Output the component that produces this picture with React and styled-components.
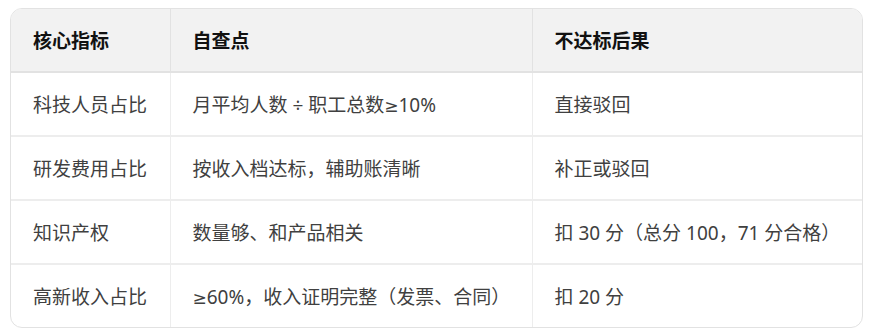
import React from "react";
import styled, { createGlobalStyle } from "styled-components";

const GlobalStyle = createGlobalStyle`
  html, body {
    margin: 0;
    padding: 0;
    background: #ffffff;
  }
  body {
    font-family: "Noto Sans", "Noto Sans CJK SC", sans-serif;
  }
`;

const Ge = () => <Sym>≥</Sym>;

const rows = [
  ["科技人员占比", <>月平均人数 ÷ 职工总数<Ge />10%</>, "直接驳回"],
  ["研发费用占比", "按收入档达标，辅助账清晰", "补正或驳回"],
  ["知识产权", "数量够、和产品相关", "扣 30 分（总分 100，71 分合格）"],
  ["高新收入占比", <><Ge />60%，收入证明完整（发票、合同）</>, "扣 20 分"],
];

const App = () => {
  return (
    <>
      <GlobalStyle />
      <Page>
        <Card>
          <Table>
            <colgroup>
              <col style={{ width: 159 }} />
              <col style={{ width: 362 }} />
              <col />
            </colgroup>
            <thead>
              <tr>
                <Th>核心指标</Th>
                <Th>自查点</Th>
                <Th $last>不达标后果</Th>
              </tr>
            </thead>
            <tbody>
              {rows.map((row, i) => (
                <tr key={i}>
                  {row.map((cell, j) => (
                    <Td key={j} $last={j === row.length - 1} $bottom={i === rows.length - 1}>
                      {cell}
                    </Td>
                  ))}
                </tr>
              ))}
            </tbody>
          </Table>
        </Card>
      </Page>
    </>
  );
};

export default App;

const Page = styled.div`
  padding: 8px 8px 0 10px;
`;

const Card = styled.div`
  width: 851px;
  border: 1px solid #e2e2e2;
  border-radius: 12px;
  overflow: hidden;
`;

const Table = styled.table`
  width: 100%;
  border-collapse: collapse;
  table-layout: fixed;
`;

const Th = styled.th`
  height: 62px;
  padding: 0 22px;
  text-align: left;
  font-size: 19px;
  font-weight: 700;
  color: #111111;
  background: #f2f2f2;
  border-bottom: 2px solid #e2e2e2;
  border-right: ${(p) => (p.$last ? "none" : "1px solid #e2e2e2")};
`;

const Td = styled.td`
  height: 62px;
  padding: 0 22px;
  font-size: 19px;
  color: #404040;
  white-space: nowrap;
  border-bottom: ${(p) => (p.$bottom ? "none" : "2px solid #ededed")};
  border-right: ${(p) => (p.$last ? "none" : "1px solid #ededed")};
`;

const Sym = styled.span`
  font-family: "DejaVu Sans", sans-serif;
  font-size: 17px;
`;
